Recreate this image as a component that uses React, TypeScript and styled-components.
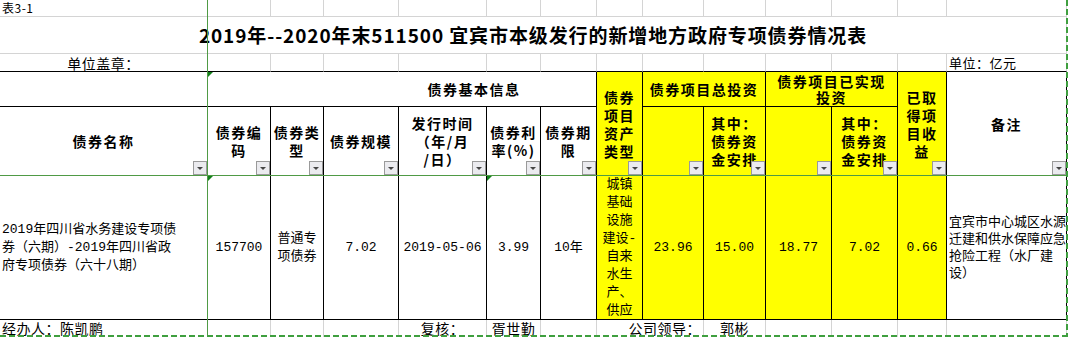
import styled, { createGlobalStyle } from "styled-components";

const GlobalStyle = createGlobalStyle`
  html, body {
    margin: 0;
    padding: 0;
    background: #fff;
  }
  body {
    font-family: "Noto Sans CJK SC", "Liberation Sans", sans-serif;
    color: #000;
  }
`

// column and row tracks of the sheet, each including its right / bottom gridline
const COLS = [208, 63, 53, 75, 88, 54, 56, 46, 61, 62, 66, 66, 49, 120]
const ROWS = [17, 37, 18, 35, 69, 144, 18]

const GRID = "#d4d4d4"
const INK = "#000"
const YELLOW = "#ffff00"
const FREEZE = "#4f9a45"
const PRINT = "#3f9f3f"

type Frame = "grid" | "table" | "edge"
type Align = "left" | "center" | "right"

const Sheet = styled.div`
  position: relative;
  width: 1070px;
  height: 337px;
  overflow: hidden;
  background: #fff;
`

const Grid = styled.div`
  display: grid;
  grid-template-columns: ${COLS.map((c) => `${c}px`).join(" ")};
  grid-template-rows: ${ROWS.map((r) => `${r}px`).join(" ")};
`

const Cell = styled.div<{ $at: string, $frame?: Frame, $fill?: boolean, $align?: Align, $top?: boolean, $indent?: number }>`
  grid-area: ${({ $at }) => $at};
  position: relative;
  box-sizing: border-box;
  display: flex;
  align-items: ${({ $top }) => ($top ? "flex-start" : "center")};
  justify-content: ${({ $align }) => ($align === "left" ? "flex-start" : $align === "right" ? "flex-end" : "center")};
  text-align: ${({ $align }) => $align ?? "center"};
  padding-left: ${({ $indent }) => $indent ?? 0}px;
  border-right: 1px solid ${({ $frame }) => ($frame === "table" ? INK : GRID)};
  border-bottom: 1px solid ${({ $frame }) => ($frame === "grid" || !$frame ? GRID : INK)};
  background: ${({ $fill }) => ($fill ? YELLOW : "transparent")};
  overflow: hidden;
  white-space: pre;
`

const Note = styled.span<{ $size?: number }>`
  font-size: ${({ $size }) => $size ?? 13}px;
  line-height: 16px;
  letter-spacing: 0.5px;
  padding: 0 2px;
`

const Title = styled.span`
  font-size: 19px;
  font-weight: 700;
  line-height: 24px;
  letter-spacing: 0.9px;
`

const Head = styled.span`
  font-size: 14px;
  font-weight: 700;
  line-height: 18px;
  letter-spacing: 1.5px;
`

const TightHead = styled(Head)`
  line-height: 16px;
`

const Value = styled.span`
  font-family: "Liberation Mono", "Noto Sans CJK SC", monospace;
  font-size: 13px;
  line-height: 18px;
  padding: 0 2px;
`

const Remark = styled(Value)`
  line-height: 17px;
`

const Filter = styled.span`
  position: absolute;
  right: 0;
  bottom: 0;
  width: 14px;
  height: 14px;
  box-sizing: border-box;
  border: 1px solid #9a9a9a;
  background: #ebebef;

  &::after {
    content: "";
    position: absolute;
    left: 50%;
    top: 5px;
    margin-left: -3.5px;
    border-left: 3.5px solid transparent;
    border-right: 3.5px solid transparent;
    border-top: 3px solid #454545;
  }
`

const Marker = styled.span`
  position: absolute;
  left: 0;
  top: 0;
  border-top: 5px solid #12801a;
  border-right: 5px solid transparent;
`

const FreezeColumn = styled.div`
  position: absolute;
  left: 207px;
  top: 0;
  width: 1px;
  height: 337px;
  background: ${FREEZE};
`

const FreezeRow = styled.div`
  position: absolute;
  left: 0;
  top: 175px;
  width: 1067px;
  height: 1px;
  background: ${FREEZE};
`

const PrintRight = styled.div`
  position: absolute;
  left: 1066px;
  top: 0;
  width: 2px;
  height: 337px;
  background: repeating-linear-gradient(to bottom, ${PRINT} 0 6px, transparent 6px 9px);
`

const PrintBottom = styled.div`
  position: absolute;
  left: 0;
  top: 335px;
  width: 1068px;
  height: 2px;
  background: repeating-linear-gradient(to right, ${PRINT} 0 6px, transparent 6px 9px);
`

const subHeads: { col: number, text: string }[] = [
  { col: 1, text: "债券名称" },
  { col: 2, text: "债券编\n码" },
  { col: 3, text: "债券类\n型" },
  { col: 4, text: "债券规模" },
  { col: 5, text: "发行时间\n（年/月\n/日）" },
  { col: 6, text: "债券利\n率(%)" },
  { col: 7, text: "债券期\n限" },
]

const investHeads: { col: number, text: string }[] = [
  { col: 9, text: "" },
  { col: 10, text: "其中：\n债券资\n金安排" },
  { col: 11, text: "" },
  { col: 12, text: "其中：\n债券资\n金安排" },
]

const plainValues: { col: number, text: string, marked?: boolean }[] = [
  { col: 2, text: "157700", marked: true },
  { col: 3, text: "普通专\n项债券" },
  { col: 4, text: "7.02" },
  { col: 5, text: "2019-05-06" },
  { col: 6, text: "3.99", marked: true },
  { col: 7, text: "10年" },
]

const amounts: { col: number, text: string }[] = [
  { col: 9, text: "23.96" },
  { col: 10, text: "15.00" },
  { col: 11, text: "18.77" },
  { col: 12, text: "7.02" },
  { col: 13, text: "0.66" },
]

const footer: Record<number, string> = {
  5: "复核：",
  6: "胥世勤",
  10: "郭彬",
}

export default function App() {
  return (
    <>
      <GlobalStyle />
      <Sheet>
        <Grid>
          {COLS.map((_, i) => (
            <Cell key={`top-${i}`} $at={`1 / ${i + 1}`} $align="left">
              {i === 0 && <Note $size={12}>表3-1</Note>}
            </Cell>
          ))}

          <Cell $at="2 / 1 / 3 / 15">
            <Title>2019年--2020年末511500 宜宾市本级发行的新增地方政府专项债券情况表</Title>
          </Cell>

          {COLS.map((_, i) => (
            <Cell key={`unit-${i}`} $at={`3 / ${i + 1}`} $frame="edge" $align={i === 13 ? "left" : "center"}>
              {i === 0 && <Note $size={14}>单位盖章：</Note>}
              {i === 13 && <Note>单位：亿元</Note>}
            </Cell>
          ))}

          <Cell $at="4 / 1" $frame="table" />
          <Cell $at="4 / 2 / 5 / 8" $frame="table" $indent={144}>
            <Marker />
            <Head>债券基本信息</Head>
          </Cell>
          <Cell $at="4 / 8 / 6 / 9" $frame="table" $fill>
            <Head>{"债券\n项目\n资产\n类型"}</Head>
            <Filter />
          </Cell>
          <Cell $at="4 / 9 / 5 / 11" $frame="table" $fill>
            <Head>债券项目总投资</Head>
          </Cell>
          <Cell $at="4 / 11 / 5 / 13" $frame="table" $fill>
            <TightHead>{"债券项目已实现\n投资"}</TightHead>
          </Cell>
          <Cell $at="4 / 13 / 6 / 14" $frame="table" $fill>
            <Head>{"已取\n得项\n目收\n益"}</Head>
            <Filter />
          </Cell>
          <Cell $at="4 / 14 / 6 / 15" $frame="table">
            <Head>备注</Head>
            <Filter />
          </Cell>

          {subHeads.map(({ col, text }) => (
            <Cell key={`head-${col}`} $at={`5 / ${col}`} $frame="table">
              <Head>{text}</Head>
              <Filter />
            </Cell>
          ))}
          {investHeads.map(({ col, text }) => (
            <Cell key={`invest-${col}`} $at={`5 / ${col}`} $frame="table" $fill>
              {text && <Head>{text}</Head>}
              <Filter />
            </Cell>
          ))}

          <Cell $at="6 / 1" $frame="table" $align="left">
            <Value>{"2019年四川省水务建设专项债\n券（六期）-2019年四川省政\n府专项债券（六十八期）"}</Value>
          </Cell>
          {plainValues.map(({ col, text, marked }) => (
            <Cell key={`value-${col}`} $at={`6 / ${col}`} $frame="table">
              {marked && <Marker />}
              <Value>{text}</Value>
            </Cell>
          ))}
          <Cell $at="6 / 8" $frame="table" $fill $top>
            <Value>{"城镇\n基础\n设施\n建设-\n自来\n水生\n产、\n供应"}</Value>
          </Cell>
          {amounts.map(({ col, text }) => (
            <Cell key={`amount-${col}`} $at={`6 / ${col}`} $frame="table" $fill>
              <Value>{text}</Value>
            </Cell>
          ))}
          <Cell $at="6 / 14" $frame="table" $align="left">
            <Remark>{"宜宾市中心城区水源\n迁建和供水保障应急\n抢险工程（水厂建\n设）"}</Remark>
          </Cell>

          <Cell $at="7 / 1" $align="left" $top>
            <Note $size={14}>经办人：陈凯鹏</Note>
          </Cell>
          {[2, 3, 4, 5, 6, 7].map((col) => (
            <Cell key={`foot-${col}`} $at={`7 / ${col}`} $top>
              {footer[col] && <Note $size={14}>{footer[col]}</Note>}
            </Cell>
          ))}
          <Cell $at="7 / 8 / 8 / 10" $align="right" $top>
            <Note $size={14}>公司领导：</Note>
          </Cell>
          {[10, 11, 12, 13, 14].map((col) => (
            <Cell key={`foot-${col}`} $at={`7 / ${col}`} $top>
              {footer[col] && <Note $size={14}>{footer[col]}</Note>}
            </Cell>
          ))}
        </Grid>

        <FreezeColumn />
        <FreezeRow />
        <PrintRight />
        <PrintBottom />
      </Sheet>
    </>
  )
}
